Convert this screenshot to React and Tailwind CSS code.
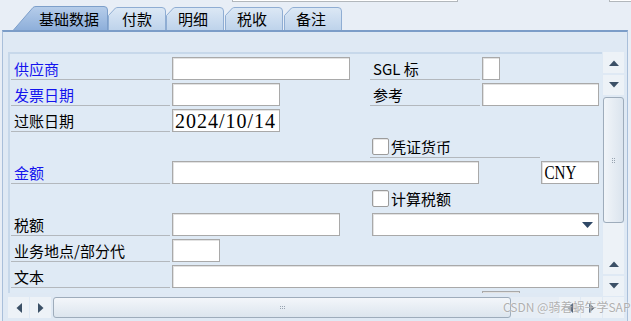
import React from "react";

const FONT = { fontFamily: '"Noto Sans CJK SC", "Noto Sans", sans-serif' };
const SERIF = { fontFamily: '"Liberation Serif", "Times New Roman", serif' };

function Label({ w, blue, children }) {
  return (
    <div
      className={`h-[23px] ${w} shrink-0 border-b border-[#b3b8bd] flex items-center pl-[3px] text-[15px] leading-none whitespace-nowrap ${
        blue ? "text-[#1414ee]" : "text-black"
      }`}
    >
      {children}
    </div>
  );
}

function Input({ w, ml, children }) {
  return (
    <div
      className={`h-[23px] ${w} ${ml} shrink-0 bg-white border border-[#a9a9a9] shadow-[inset_1px_1px_0_#e2e2e2] flex items-center overflow-hidden`}
    >
      {children}
    </div>
  );
}

function Check() {
  return (
    <div className="w-[17px] h-[17px] shrink-0 bg-white border border-[#9c9c9c] rounded-[2px] shadow-[inset_1px_1px_0_#e6e6e6]" />
  );
}

function Tab({ active, w, label, pl }) {
  const width = active ? 95 : 58;
  return (
    <div className={`relative h-[24px] ${w} shrink-0 flex items-center ${pl}`}>
      <svg className="absolute left-0 top-0" width={width} height="24" viewBox={`0 0 ${width} 24`}>
        <defs>
          <linearGradient id="ta" x1="0" y1="0" x2="0" y2="1">
            <stop offset="0" stopColor="#b6cdea" />
            <stop offset="1" stopColor="#8eafda" />
          </linearGradient>
          <linearGradient id="ti" x1="0" y1="0" x2="0" y2="1">
            <stop offset="0" stopColor="#dce8f5" />
            <stop offset="1" stopColor="#bed3eb" />
          </linearGradient>
        </defs>
        {active ? (
          <path
            d="M0.5 24 L20 1.5 Q21 0.5 23 0.5 L91 0.5 Q94.5 0.5 94.5 4 L94.5 24"
            fill="url(#ta)"
            stroke="#7d9fca"
          />
        ) : (
          <path
            d="M0.5 24 L0.5 9.5 L7.5 2 Q8.5 1.5 10 1.5 L54 1.5 Q57.5 1.5 57.5 5 L57.5 24"
            fill="url(#ti)"
            stroke="#8fadd3"
          />
        )}
      </svg>
      <span className="relative text-[15px] leading-none text-black whitespace-nowrap pt-[1px]">{label}</span>
    </div>
  );
}

function Arrow({ dir }) {
  const paths = {
    up: "M0 6 L5 0.5 L10 6 Z",
    down: "M0 0 L10 0 L5 5.5 Z",
    left: "M6 0 L0.5 5 L6 10 Z",
    right: "M0 0 L5.5 5 L0 10 Z",
  };
  const vert = dir === "up" || dir === "down";
  return (
    <svg width={vert ? 10 : 6} height={vert ? 6 : 10} viewBox={vert ? "0 0 10 6" : "0 0 6 10"}>
      <path d={paths[dir]} fill="#3b5066" />
    </svg>
  );
}

function Btn({ dir, h }) {
  return (
    <div className={`${h} w-[21px] shrink-0 bg-[#edf2f7] flex items-center justify-center`}>
      <Arrow dir={dir} />
    </div>
  );
}

function Grip({ vertical }) {
  return (
    <div className={`grid ${vertical ? "grid-cols-2" : "grid-cols-3"} gap-[1px]`}>
      {Array.from({ length: 6 }).map((_, i) => (
        <div key={i} className="w-[1px] h-[1px] bg-[#97a3b0]" />
      ))}
    </div>
  );
}

export default function App() {
  return (
    <div className="relative w-[631px] h-[321px] overflow-hidden bg-[#e8eef6] flex flex-col" style={FONT}>
      {/* top remnants */}
      <div className="h-[6px] flex shrink-0">
        <div className="ml-[232px] w-[228px] h-[2px] bg-white border-x border-b border-[#b2b7bc]" />
        <div className="ml-[151px] w-[22px] h-[2px] bg-white border-l border-b border-[#b2b7bc]" />
      </div>

      {/* tabs */}
      <div className="h-[24px] flex shrink-0 pl-[13px]">
        <Tab active w="w-[95px]" pl="pl-[26px]" label="基础数据" />
        <Tab w="w-[58px]" pl="pl-[14px]" label="付款" />
        <Tab w="w-[59px]" pl="pl-[12px]" label="明细" />
        <Tab w="w-[59px]" pl="pl-[12px]" label="税收" />
        <Tab w="w-[59px]" pl="pl-[12px]" label="备注" />
      </div>

      {/* panel */}
      <div className="ml-[2px] w-[626px] flex-1 bg-[#dfe9f4] border-t-2 border-t-[#7c9dc8] border-x border-x-[#a9bfda] pt-[20px] pl-[5px] pr-[3px] flex">
        <div className="w-[595px] flex flex-col">
          {/* form box */}
          <div className="h-[241px] overflow-hidden border-t-2 border-l-2 border-[#c7d8ea] bg-[#dfeaf5] pt-[3px] pl-[1px] flex flex-col gap-[3px]">
            {/* row 1 */}
            <div className="flex h-[23px] shrink-0">
              <Label w="w-[159px]" blue>供应商</Label>
              <Input w="w-[178px]" ml="ml-[2px]" />
              <div className="ml-[20px]">
                <Label w="w-[110px]">SGL 标</Label>
              </div>
              <Input w="w-[18px]" ml="ml-[2px]" />
            </div>
            {/* row 2 */}
            <div className="flex h-[23px] shrink-0">
              <Label w="w-[159px]" blue>发票日期</Label>
              <Input w="w-[108px]" ml="ml-[2px]" />
              <div className="ml-[90px]">
                <Label w="w-[110px]">参考</Label>
              </div>
              <Input w="w-[117px]" ml="ml-[2px]" />
            </div>
            {/* row 3 */}
            <div className="flex h-[23px] shrink-0">
              <Label w="w-[159px]">过账日期</Label>
              <Input w="w-[108px]" ml="ml-[2px]">
                <span className="pl-[2px] text-[20px] leading-none tracking-[1px] text-black" style={SERIF}>
                  2024/10/14
                </span>
              </Input>
            </div>
            {/* row 4 */}
            <div className="flex h-[23px] shrink-0">
              <div className="ml-[359px] w-[170px] h-[23px] border-b border-[#b3b8bd] flex items-center">
                <div className="ml-[2px]">
                  <Check />
                </div>
                <span className="ml-[2px] text-[15px] leading-none text-black">凭证货币</span>
              </div>
            </div>
            {/* row 5 */}
            <div className="flex h-[23px] shrink-0">
              <Label w="w-[159px]" blue>金额</Label>
              <Input w="w-[307px]" ml="ml-[2px]" />
              <Input w="w-[58px]" ml="ml-[62px]">
                <span
                  className="inline-block pl-[3px] text-[18px] leading-none text-black scale-x-[0.84] origin-left"
                  style={SERIF}
                >
                  CNY
                </span>
              </Input>
            </div>
            {/* row 6 */}
            <div className="flex h-[23px] shrink-0 items-center">
              <div className="ml-[361px]">
                <Check />
              </div>
              <span className="ml-[2px] text-[15px] leading-none text-black">计算税额</span>
            </div>
            {/* row 7 */}
            <div className="flex h-[23px] shrink-0">
              <Label w="w-[159px]">税额</Label>
              <Input w="w-[168px]" ml="ml-[2px]" />
              <Input w="w-[227px]" ml="ml-[32px]">
                <div className="ml-auto mr-[5px] flex">
                  <svg width="11" height="6" viewBox="0 0 11 6">
                    <path d="M0 0 L11 0 L5.5 6 Z" fill="#2f4866" />
                  </svg>
                </div>
              </Input>
            </div>
            {/* row 8 */}
            <div className="flex h-[23px] shrink-0">
              <Label w="w-[159px]">业务地点/部分代</Label>
              <Input w="w-[48px]" ml="ml-[2px]" />
            </div>
            {/* row 9 */}
            <div className="flex h-[23px] shrink-0">
              <Label w="w-[159px]">文本</Label>
              <Input w="w-[427px]" ml="ml-[2px]" />
            </div>
            {/* row 10 */}
            <div className="flex h-[23px] shrink-0">
              <Input w="w-[38px]" ml="ml-[471px]" />
            </div>
          </div>

          {/* horizontal scrollbar */}
          <div className="mt-[4px] h-[21px] flex">
            <Btn dir="left" h="h-[21px]" />
            <div className="ml-[1px]">
              <Btn dir="right" h="h-[21px]" />
            </div>
            <div className="ml-[2px] w-[458px] h-[21px] rounded-[3px] border border-[#9eacbb] bg-gradient-to-b from-[#f3f6fa] to-[#dce5ee] flex items-center justify-center">
              <Grip />
            </div>
            <div className="w-[48px] h-[21px] bg-[#e6edf5]" />
            <Btn dir="left" h="h-[21px]" />
            <div className="ml-[1px]">
              <Btn dir="right" h="h-[21px]" />
            </div>
          </div>
        </div>

        {/* vertical scrollbar */}
        <div className="ml-[1px] w-[21px] flex flex-col">
          <Btn dir="up" h="h-[21px]" />
          <div className="mt-[2px]">
            <Btn dir="down" h="h-[20px]" />
          </div>
          <div className="mt-[2px] h-[126px] rounded-[3px] border border-[#9eacbb] bg-gradient-to-r from-[#f1f5f9] to-[#dbe4ee] flex items-center justify-center">
            <Grip vertical />
          </div>
          <div className="h-[30px] bg-[#edf2f7]" />
          <Btn dir="up" h="h-[21px]" />
          <div className="mt-[2px]">
            <Btn dir="down" h="h-[20px]" />
          </div>
          <div className="mt-[1px] h-[21px] bg-[#edf2f7]" />
        </div>
      </div>

      {/* watermark */}
      <div className="absolute left-[503px] top-[301px] text-[12px] leading-none whitespace-nowrap text-[#b0b0b0] [text-shadow:0_0_2px_#ffffff]">
        CSDN @骑着蜗牛学SAP
      </div>
    </div>
  );
}
